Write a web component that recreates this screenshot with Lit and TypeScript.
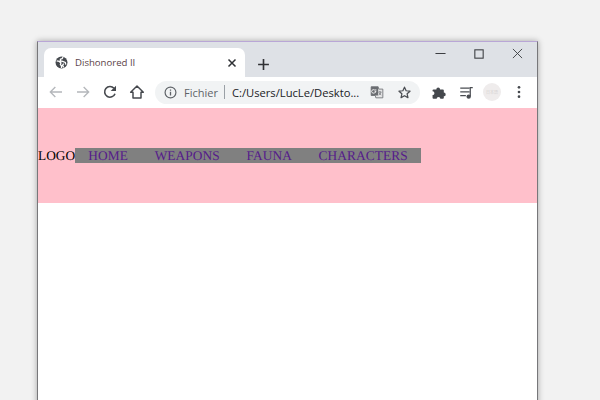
import { LitElement, html, css, svg } from "lit";
import { customElement } from "lit/decorators.js";

const icon = (w: number, cls: string, body: unknown) => html`<svg class=${cls} width=${w} height=${w} viewBox="0 0 24 24">${body}</svg>`;

@customElement("app-root")
export class AppRoot extends LitElement {
  static styles = css`
    :host { display: block; width: 600px; height: 400px; overflow: hidden; background: #f2f2f2; }
    .stage { padding: 41px 0 0 37px; box-sizing: border-box; height: 400px; }
    .win { width: 501px; height: 400px; box-sizing: border-box; background: #fff; border: 1px solid #77777a; border-top-color: #b9a6d6;
      box-shadow: 0 0 6px rgba(0,0,0,.32); }
    .titlebar { height: 35px; background: #dee1e6; display: flex; align-items: flex-end; box-sizing: border-box; }
    .tab { width: 201px; height: 29px; margin-left: 6px; background: #fff; border-radius: 7px 7px 0 0; display: flex; align-items: center; box-sizing: border-box; padding: 0 0 0 11px; flex: none; }
    .tab-title { font: 9.6px "Open Sans", sans-serif; color: #5b3f48; margin-left: 7px; flex: 1; }
    .tab-x { margin-right: 7px; }
    .plus { margin: 0 0 6px 12px; flex: none; }
    .controls { margin-left: auto; align-self: flex-start; display: flex; }
    .ctl { width: 38.5px; height: 23px; display: flex; align-items: center; justify-content: center; }
    .toolbar { height: 30px; background: #fff; display: flex; align-items: center; box-sizing: border-box; padding: 0 0 0 10px; }
    .nav-ic { width: 27px; display: flex; justify-content: flex-start; flex: none; }
    .omni { margin-left: -1px; width: 265px; height: 23px; flex: none; border-radius: 12px; background: #f1f3f4; display: flex; align-items: center; padding-left: 9px; box-sizing: border-box; font: 11px "Open Sans", sans-serif; }
    .fichier { color: #5f6368; margin-left: 7px; }
    .sep { width: 1px; height: 14px; background: #9aa0a6; margin: 0 7px 0 6px; }
    .url { color: #202124; white-space: nowrap; font-size: 11.2px; }
    .omni-r { display: flex; align-items: center; margin-left: auto; padding-right: 8px; gap: 13px; }
    .tools { display: flex; align-items: center; margin-left: 11px; }
    .media { margin-left: 13px; }
    .avatar { width: 18px; height: 18px; border-radius: 50%; background: #efecec; color: #d6d2d2; font: 4px "Noto Sans CJK JP", sans-serif; display: flex; align-items: center; justify-content: center; margin: 0 11px 0 9px; white-space: nowrap; }
    .page { background: #fff; border-top: 1px solid #fff; }
    header { height: 95px; background: #ffc0cb; display: flex; align-items: center; font: 13.33px/15px "Liberation Serif", serif; color: #000; text-rendering: geometricPrecision; }
    nav { display: flex; background: #808080; }
    nav a { color: #551a8b; padding: 0 13.33px; text-decoration: none; letter-spacing: .1px; }
  `;
  render() {
    return html`<div class="stage"><div class="win">
      <div class="titlebar">
        <div class="tab">
          ${icon(13, "", svg`<circle cx="12" cy="12" r="11" fill="#45494e"/><path d="M3 9l5 1 3 3-1 3 2 2v4M15 2l-2 3-3 1v3l4 1 5 2 1 4M16 14l-2 3 2 4" stroke="#fff" stroke-width="2.4" fill="none"/>`)}
          <span class="tab-title">Dishonored II</span>
          ${icon(12, "tab-x", svg`<path d="M5 5l14 14M19 5L5 19" stroke="#2f3135" stroke-width="3" fill="none"/>`)}
        </div>
        ${icon(13, "plus", svg`<path d="M12 2v20M2 12h20" stroke="#303135" stroke-width="3" fill="none"/>`)}
        <div class="controls">
          <span class="ctl">${icon(11, "", svg`<path d="M1 12h22" stroke="#3c3e42" stroke-width="2.2"/>`)}</span>
          <span class="ctl">${icon(10, "", svg`<rect x="2" y="2" width="20" height="20" fill="none" stroke="#3c3e42" stroke-width="2.6"/>`)}</span>
          <span class="ctl">${icon(11, "", svg`<path d="M2 2l20 20M22 2L2 22" stroke="#3c3e42" stroke-width="2" fill="none"/>`)}</span>
        </div>
      </div>
      <div class="toolbar">
        <span class="nav-ic">${icon(16, "", svg`<path d="M21 12H4M11 4.5L3.5 12l7.5 7.5" stroke="#b4b7bb" stroke-width="2" fill="none"/>`)}</span>
        <span class="nav-ic">${icon(16, "", svg`<path d="M3 12h17M13 4.5l7.5 7.5-7.5 7.5" stroke="#b4b7bb" stroke-width="2" fill="none"/>`)}</span>
        <span class="nav-ic">${icon(16, "", svg`<path d="M19.5 14.5A8 8 0 1 1 18 6.5" stroke="#45484d" stroke-width="2.4" fill="none"/><path d="M21 2.5v8h-8z" fill="#45484d"/>`)}</span>
        <span class="nav-ic">${icon(16, "", svg`<path d="M12 3L2.5 12.5H6v8.5h12v-8.5h3.5z" stroke="#45484d" stroke-width="2.2" fill="none" stroke-linejoin="round"/>`)}</span>
        <div class="omni">
          ${icon(13, "", svg`<circle cx="12" cy="12" r="10" fill="none" stroke="#5f6368" stroke-width="2.2"/><path d="M12 10.5v7M12 6.5v2.2" stroke="#5f6368" stroke-width="2.4"/>`)}
          <span class="fichier">Fichier</span><span class="sep"></span>
          <span class="url">C:/Users/LucLe/Deskto...</span>
          <span class="omni-r">
            ${icon(14, "", svg`<path d="M2 3h12l1 4h7v15H10l-1-4H2z" fill="#e4e5e6" stroke="#6a6d71" stroke-width="1.4"/><path d="M2 3h12v15H2z" fill="#6a6d71"/><path d="M11 8.5H7.5a3 3 0 1 0 0 5c1.5 0 2.7-1 2.7-2.5H8" stroke="#fff" stroke-width="1.5" fill="none"/><path d="M14.5 12h5M17 10.5v1.5M19 12c-.5 2.5-2 4-4 5M15.5 13c.5 1.5 2 3 3.7 4" stroke="#6a6d71" stroke-width="1.2" fill="none"/>`)}
            ${icon(15, "", svg`<path d="M12 3.5l2.6 5.7 6.2.7-4.6 4.2 1.3 6.1L12 17.1l-5.5 3.1 1.3-6.1-4.6-4.2 6.2-.7z" fill="none" stroke="#4a4d52" stroke-width="2" stroke-linejoin="round"/>`)}
          </span>
        </div>
        <div class="tools">
          ${icon(15, "", svg`<path d="M4 7h4.5a3 3 0 1 1 6 0H19a1.5 1.5 0 0 1 1.5 1.5V12a3 3 0 1 1 0 6v2.5A1.5 1.5 0 0 1 19 22h-4a3 3 0 1 0-6 0H4a1.5 1.5 0 0 1-1.500-1.500V16a3 3 0 1 0 0-6V8.500A1.500 1.500 0 0 1 4 7z" fill="#45484d"/>`)}
          ${icon(15, "media", svg`<path d="M2 5h15M2 11h15M2 17h9" stroke="#4a4d52" stroke-width="2" fill="none"/><path d="M18 18V4h4" stroke="#4a4d52" stroke-width="2" fill="none"/><circle cx="15.500" cy="18.500" r="3.500" fill="#4a4d52"/>`)}
          <span class="avatar">日本語</span>
          ${icon(14, "", svg`<circle cx="12" cy="4" r="2.300" fill="#45484d"/><circle cx="12" cy="12" r="2.300" fill="#45484d"/><circle cx="12" cy="20" r="2.300" fill="#45484d"/>`)}
        </div>
      </div>
      <div class="page">
        <header><span>LOGO</span><nav><a>HOME</a><a>WEAPONS</a><a>FAUNA</a><a>CHARACTERS</a></nav></header>
      </div>
    </div></div>`;
  }
}
